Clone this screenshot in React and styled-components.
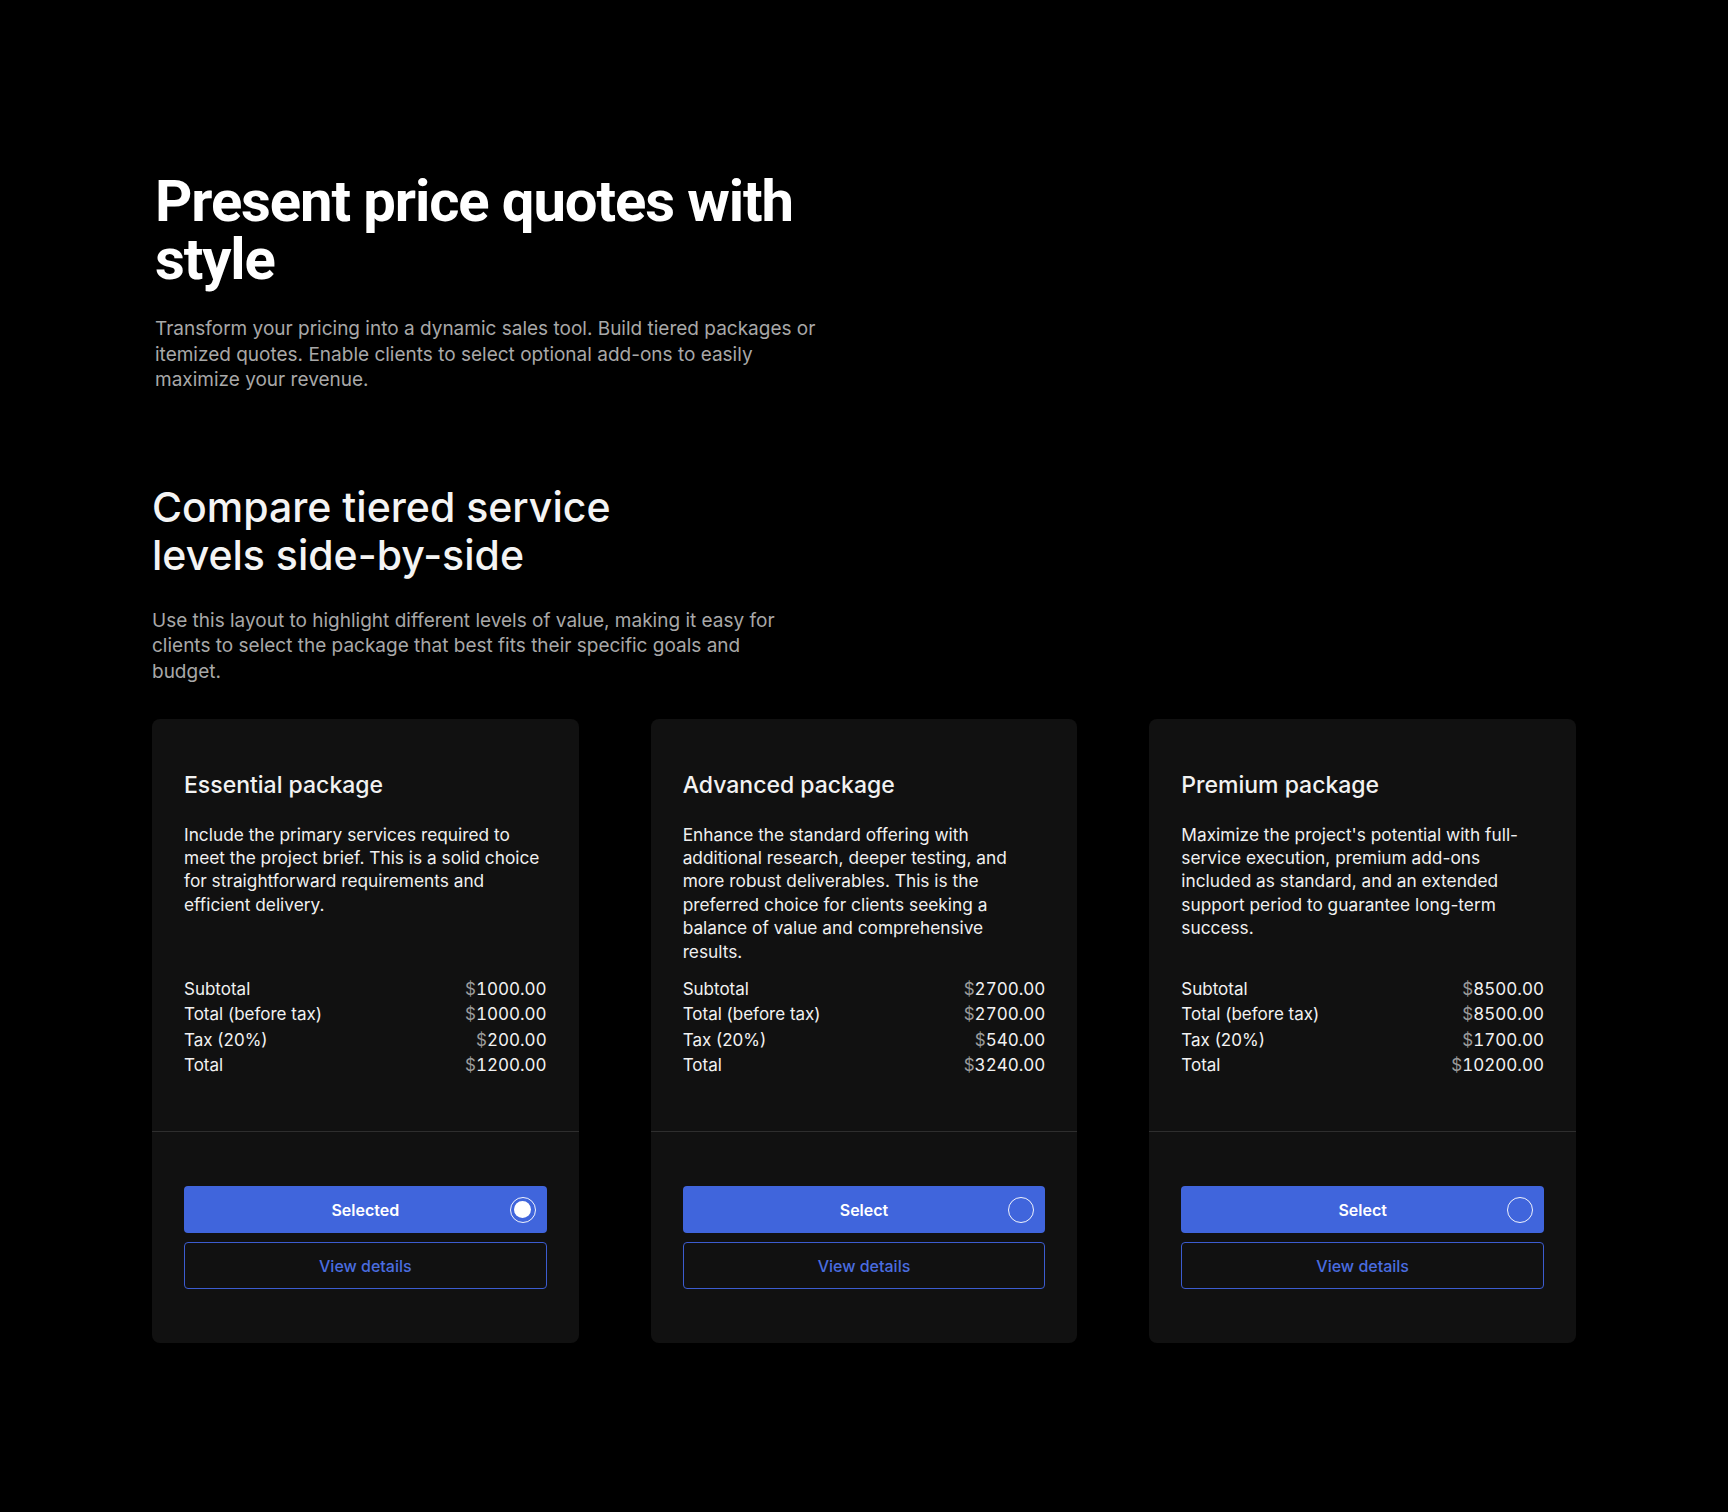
import React, { useState } from 'react';
import styled, { createGlobalStyle } from 'styled-components';

const packages = [
    {
        name: 'Essential package',
        description: 'Include the primary services required to meet the project brief. This is a solid choice for straightforward requirements and efficient delivery.',
        subtotal: '1000.00',
        tax: '200.00',
        total: '1200.00'
    },
    {
        name: 'Advanced package',
        description: 'Enhance the standard offering with additional research, deeper testing, and more robust deliverables. This is the preferred choice for clients seeking a balance of value and comprehensive results.',
        subtotal: '2700.00',
        tax: '540.00',
        total: '3240.00'
    },
    {
        name: 'Premium package',
        description: "Maximize the project's potential with full-service execution, premium add-ons included as standard, and an extended support period to guarantee long-term success.",
        subtotal: '8500.00',
        tax: '1700.00',
        total: '10200.00'
    }
];

const Price = ({ value }) => (
    <Amount><Currency>$</Currency>{value}</Amount>
);

const App = () => {
    const [selected, setSelected] = useState(0);

    return (
        <>
            <GlobalStyle />
            <Page>
                <Hero>
                    <Title>Present price quotes with style</Title>
                    <Lead width={676}>
                        Transform your pricing into a dynamic sales tool. Build tiered packages or
                        itemized quotes. Enable clients to select optional add-ons to easily
                        maximize your revenue.
                    </Lead>
                </Hero>
                <Section>
                    <Heading>Compare tiered service levels side-by-side</Heading>
                    <Lead width={645}>
                        Use this layout to highlight different levels of value, making it easy for
                        clients to select the package that best fits their specific goals and budget.
                    </Lead>
                    <Cards>
                        {packages.map((pkg, i) => (
                            <Card key={pkg.name}>
                                <CardBody>
                                    <CardTitle>{pkg.name}</CardTitle>
                                    <Description>{pkg.description}</Description>
                                    <Totals>
                                        <Row><span>Subtotal</span><Price value={pkg.subtotal} /></Row>
                                        <Row><span>Total (before tax)</span><Price value={pkg.subtotal} /></Row>
                                        <Row><span>Tax (20%)</span><Price value={pkg.tax} /></Row>
                                        <Row><span>Total</span><Price value={pkg.total} /></Row>
                                    </Totals>
                                </CardBody>
                                <CardFooter>
                                    <SelectButton onClick={() => setSelected(i)}>
                                        {selected === i ? 'Selected' : 'Select'}
                                        <Radio checked={selected === i} />
                                    </SelectButton>
                                    <DetailsButton>View details</DetailsButton>
                                </CardFooter>
                            </Card>
                        ))}
                    </Cards>
                </Section>
            </Page>
        </>
    );
};

export default App;

const GlobalStyle = createGlobalStyle`
    html, body {
        margin: 0;
        background: #000000;
    }

    body {
        font-family: Inter, "Noto Sans", sans-serif;
        color: #ffffff;
        -webkit-font-smoothing: antialiased;
    }

    * {
        box-sizing: border-box;
    }
`;

const Page = styled.main`
    width: 1424px;
    margin: 0 auto;
    padding: 172px 0 150px;
`;

const Hero = styled.header`
    padding-left: 3px;
`;

const Title = styled.h1`
    margin: 0;
    max-width: 720px;
    font-family: Roboto, "Liberation Sans", sans-serif;
    font-size: 58px;
    font-weight: 700;
    line-height: 58px;
    letter-spacing: -1.1px;
    color: #ffffff;
`;

const Lead = styled.p`
    margin: 28px 0 0;
    max-width: ${props => props.width}px;
    font-size: 19px;
    line-height: 25.6px;
    color: #a8a8a8;
`;

const Section = styled.section`
    margin-top: 90px;
`;

const Heading = styled.h2`
    margin: 0;
    max-width: 540px;
    font-size: 41px;
    font-weight: 500;
    line-height: 48px;
    letter-spacing: 0;
    color: #f4f4f4;

    & + ${Lead} {
        margin-top: 29px;
    }
`;

const Cards = styled.div`
    display: grid;
    grid-template-columns: repeat(3, 1fr);
    gap: 72px;
    margin-top: 34px;
`;

const Card = styled.article`
    display: flex;
    flex-direction: column;
    background: #111111;
    border-radius: 8px;
    overflow: hidden;
`;

const CardBody = styled.div`
    flex: 1;
    display: flex;
    flex-direction: column;
    padding: 51px 32px 53px;
`;

const CardTitle = styled.h3`
    margin: 0 0 23px;
    font-size: 23px;
    font-weight: 500;
    line-height: 30px;
    color: #f2f2f2;
`;

const Description = styled.p`
    margin: 0 0 14px;
    font-size: 17.3px;
    line-height: 23.4px;
    color: #f0f0f0;
`;

const Totals = styled.div`
    margin-top: auto;
    font-size: 17px;
    line-height: 25.3px;
    color: #f2f2f2;
`;

const Row = styled.div`
    display: flex;
    justify-content: space-between;
`;

const Amount = styled.span`
    font-variant-numeric: tabular-nums;
    color: #f2f2f2;
`;

const Currency = styled.span`
    color: #9a9a9a;
`;

const CardFooter = styled.div`
    display: flex;
    flex-direction: column;
    gap: 9px;
    padding: 54px 32px;
    border-top: 1px solid #2e2e2e;
`;

const SelectButton = styled.button`
    position: relative;
    display: flex;
    align-items: center;
    justify-content: center;
    height: 47px;
    border: none;
    border-radius: 4px;
    background: #4065dc;
    color: #ffffff;
    font-family: Inter, sans-serif;
    font-size: 16px;
    font-weight: 600;
    cursor: pointer;
`;

const Radio = styled.span`
    position: absolute;
    right: 11px;
    top: 50%;
    width: 26px;
    height: 26px;
    transform: translateY(-50%);
    border: 1.5px solid rgba(255, 255, 255, 0.92);
    border-radius: 50%;
    display: flex;
    align-items: center;
    justify-content: center;

    &::after {
        content: '';
        width: 17px;
        height: 17px;
        border-radius: 50%;
        background: #ffffff;
        display: ${props => props.checked ? 'block' : 'none'};
    }
`;

const DetailsButton = styled.button`
    height: 47px;
    border: 1px solid #3c5cd0;
    border-radius: 4px;
    background: transparent;
    color: #4a6de0;
    font-family: Inter, sans-serif;
    font-size: 16px;
    font-weight: 500;
    cursor: pointer;
`;
